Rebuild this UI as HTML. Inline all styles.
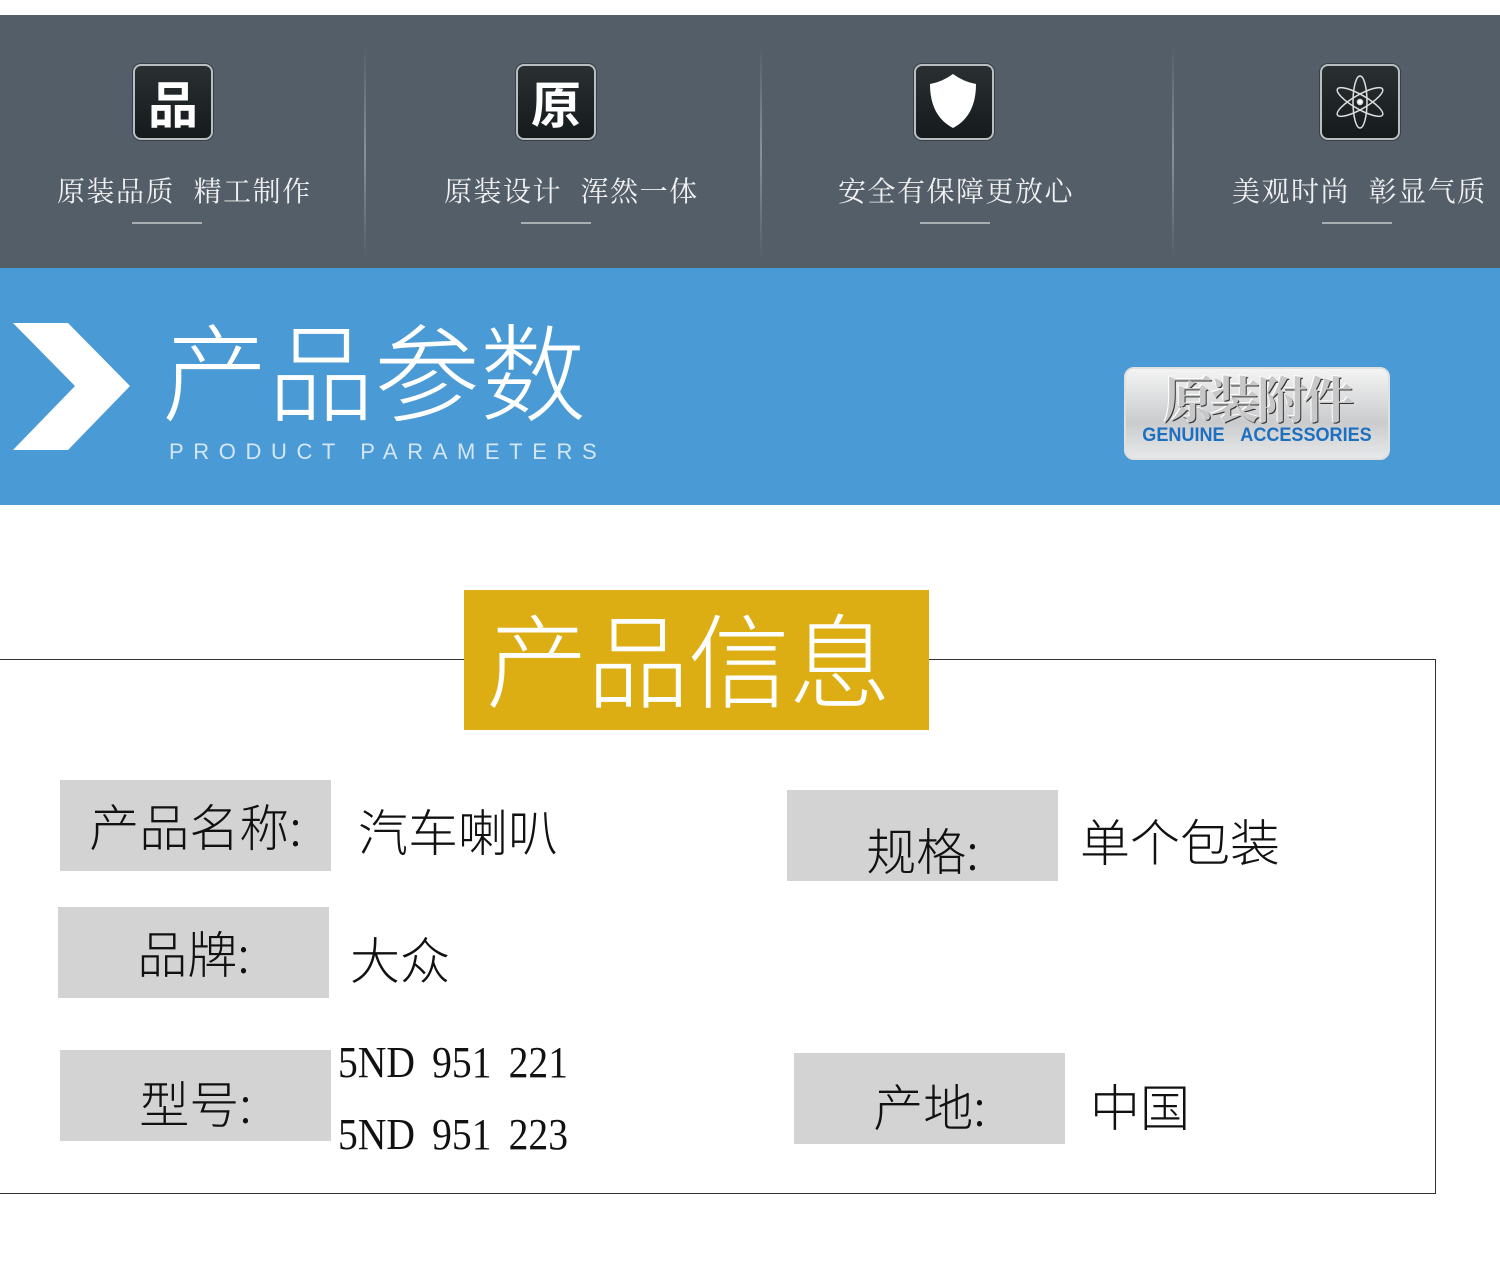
<!DOCTYPE html>
<html><head><meta charset="utf-8"><style>
*{margin:0;padding:0;box-sizing:border-box}
body{width:1500px;height:1284px;background:#fff;position:relative;overflow:hidden;font-family:"Liberation Sans","Noto Sans CJK SC",sans-serif}
.a{position:absolute}
.top{left:0;top:15px;width:1500px;height:253px;background:#545e69}
.sep{top:45px;width:2px;height:215px;background:linear-gradient(#545e69,#8a9198 50%,#545e69)}
.ic{top:64px;width:80px;height:76px;border-radius:8px;background:linear-gradient(#2a2f32,#151a1c);border:2px solid #b9bec2;box-shadow:0 0 0 1px #3a3f44;color:#fff;font:bold 50px/72px "Noto Sans CJK SC",sans-serif;text-align:center}
.cap{top:170px;color:#f0f0f0;font:28px/40px "Noto Serif CJK SC","Noto Sans CJK SC",serif;white-space:nowrap;letter-spacing:1.5px;word-spacing:10px}
.ul{top:222px;width:70px;height:2px;background:#a9aeb3}
.blue{left:0;top:268px;width:1500px;height:237px;background:#4a9ad5}
.lab{background:#d3d3d3;width:271px;height:91px;font:300 50px/91px "Noto Sans CJK SC",sans-serif;color:#111;text-align:center}
.val{font:300 50px/60px "Noto Sans CJK SC",sans-serif;color:#111;white-space:nowrap}
.num{font:44px/50px "Liberation Serif",serif;color:#111;transform:scaleX(.9);transform-origin:left;white-space:nowrap;word-spacing:8px}
</style></head><body>
<div class="a top"></div>
<div class="a sep" style="left:364px"></div>
<div class="a sep" style="left:760px"></div>
<div class="a sep" style="left:1172px"></div>
<div class="a ic" style="left:133px">品</div>
<div class="a ic" style="left:516px">原</div>
<div class="a ic" style="left:914px"><svg width="76" height="72" viewBox="0 0 76 72"><path d="M14 18 Q26 16 37 8 Q48 16 60 18 Q60 50 37 62 Q14 50 14 18Z" fill="#fff"/></svg></div>
<div class="a ic" style="left:1320px"><svg width="76" height="72" viewBox="0 0 76 72" fill="none" stroke="#ddd" stroke-width="1.5"><ellipse cx="38" cy="36" rx="7" ry="26"/><ellipse cx="38" cy="36" rx="7" ry="26" transform="rotate(60 38 36)"/><ellipse cx="38" cy="36" rx="7" ry="26" transform="rotate(-60 38 36)"/><circle cx="38" cy="36" r="2.5" fill="#fff"/></svg></div>
<div class="a cap" style="left:57px">原装品质 精工制作</div>
<div class="a cap" style="left:444px">原装设计 浑然一体</div>
<div class="a cap" style="left:838px">安全有保障更放心</div>
<div class="a cap" style="left:1232px">美观时尚 彰显气质</div>
<div class="a ul" style="left:132px"></div>
<div class="a ul" style="left:521px"></div>
<div class="a ul" style="left:920px"></div>
<div class="a ul" style="left:1322px"></div>
<div class="a blue"></div>
<svg class="a" style="left:0;top:268px" width="140" height="237"><polygon points="13,55 68,55 130,118 68,182 13,182 75,118" fill="#fff"/></svg>
<div class="a" style="left:162px;top:302px;color:#fff;font:200 106px/130px 'Noto Sans CJK SC',sans-serif;letter-spacing:0px;white-space:nowrap">产品参数</div>
<div class="a" style="left:169px;top:438px;color:#d5e6f5;font:22px/28px 'Liberation Sans',sans-serif;letter-spacing:9.6px;white-space:nowrap">PRODUCT PARAMETERS</div>
<div class="a" style="left:1124px;top:367px;width:266px;height:93px;border-radius:10px;background:linear-gradient(#f4f4f4,#c9cbcd 60%,#e7e8e9);border:2px solid #e0e0e0;text-align:center">
<div style="font:bold 50px/56px 'Noto Serif CJK SC',serif;color:#c8c8c8;text-shadow:1px 1px 0 #333,-1px -1px 0 #fff;letter-spacing:-3px">原装附件</div>
<div style="font:bold 19px/22px 'Liberation Sans',sans-serif;color:#1d6fc0;word-spacing:12px;transform:scaleX(.95)">GENUINE ACCESSORIES</div></div>
<div class="a" style="left:0;top:659px;width:1436px;height:535px;border:1px solid #333;border-left:none"></div>
<div class="a" style="left:464px;top:590px;width:465px;height:140px;background:#dcae14"></div>
<div class="a" style="left:486px;top:592px;color:#fff;font:200 102px/130px 'Noto Sans CJK SC',sans-serif;letter-spacing:-1px;white-space:nowrap">产品信息</div>
<div class="a lab" style="left:60px;top:780px">产品名称:</div>
<div class="a val" style="left:358px;top:800px">汽车喇叭</div>
<div class="a lab" style="left:58px;top:907px">品牌:</div>
<div class="a val" style="left:350px;top:928px">大众</div>
<div class="a lab" style="left:60px;top:1050px;line-height:104px">型号:</div>
<div class="a num" style="left:338px;top:1038px">5ND 951 221</div>
<div class="a num" style="left:338px;top:1110px">5ND 951 223</div>
<div class="a lab" style="left:787px;top:790px;line-height:118px">规格:</div>
<div class="a val" style="left:1080px;top:810px">单个包装</div>
<div class="a lab" style="left:794px;top:1053px;line-height:104px">产地:</div>
<div class="a val" style="left:1090px;top:1075px">中国</div>
</body></html>
